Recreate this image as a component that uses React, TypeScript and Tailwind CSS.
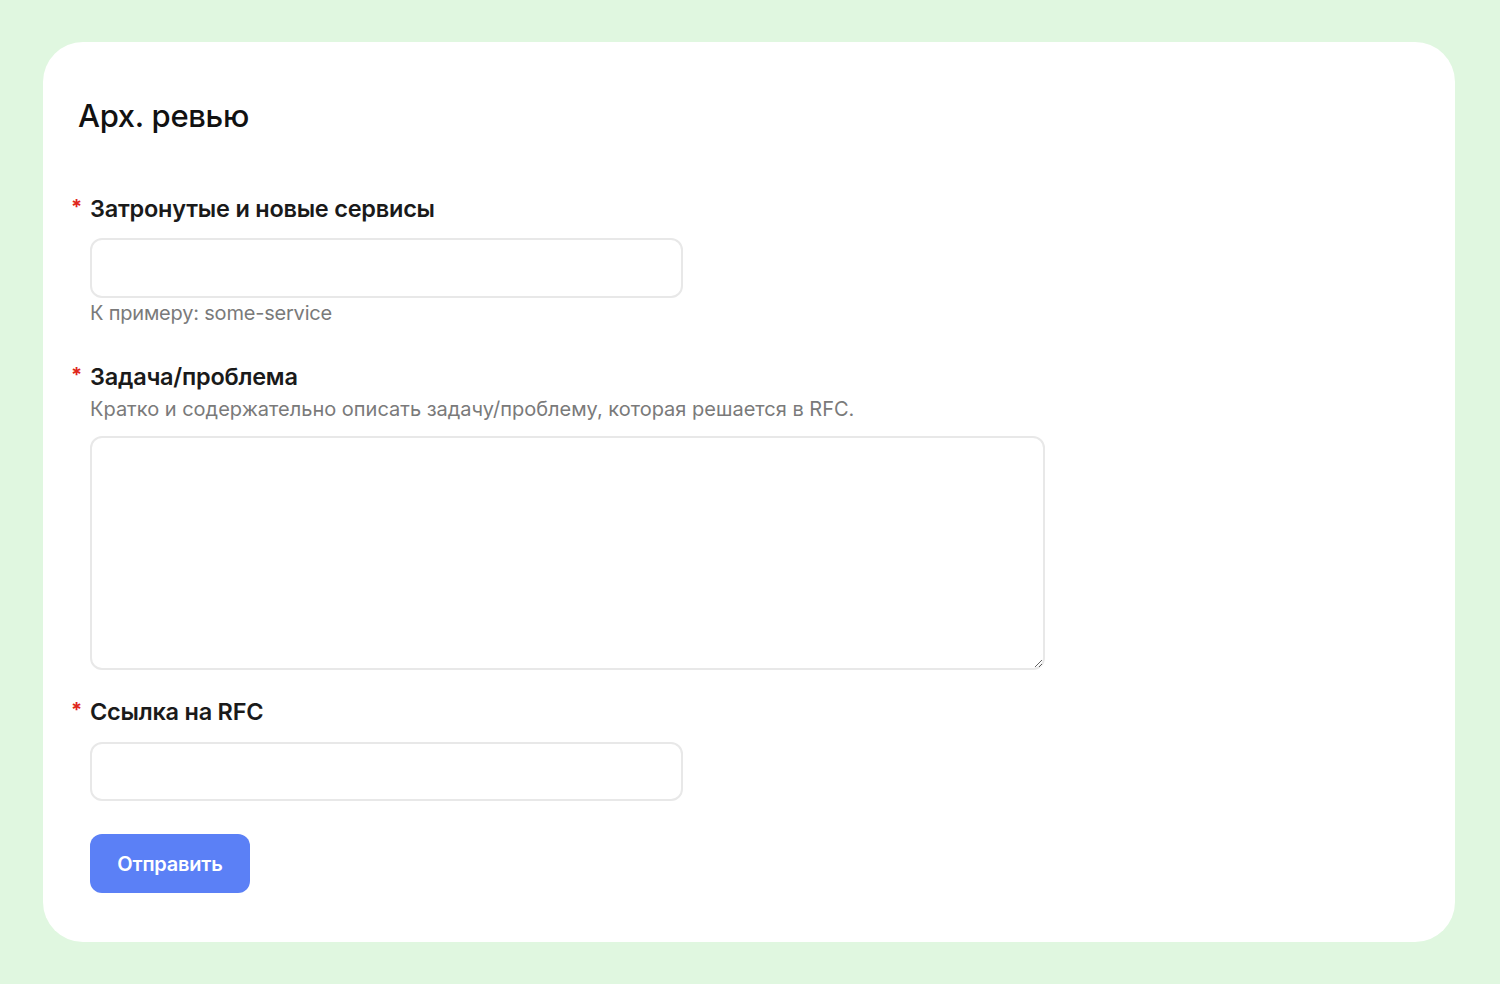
import React from 'react';

const font = { fontFamily: 'Inter, "Noto Sans", sans-serif' };

const Label: React.FC<{ text: string }> = ({ text }) => (
  <div className="flex items-start h-[30px]">
    <span className="w-[20px] text-[#e0261b] text-[20px] leading-[26px] font-bold pl-[1px]">*</span>
    <span className="text-[23.5px] leading-[30px] font-semibold text-[#1a1a1a] tracking-[-0.01em]">{text}</span>
  </div>
);

export default function App() {
  return (
    <div className="min-h-screen w-full bg-[#e0f7e0] pt-[42px] pl-[43px]" style={font}>
      <div className="w-[1412px] h-[900px] bg-white rounded-[40px] pt-[56px] pl-[27px] flex flex-col">
        {/* Title */}
        <h1 className="ml-[8px] text-[31px] leading-[36px] font-medium text-[#111] tracking-[-0.01em]">Арх. ревью</h1>

        {/* Field 1 */}
        <div className="mt-[60px]">
          <Label text="Затронутые и новые сервисы" />
          <div className="ml-[20px]">
            <input className="mt-[14px] block w-[593px] h-[60px] rounded-[12px] border-2 border-[#e8e8e8] outline-none" />
            <div className="mt-[1px] text-[20px] leading-[28px] text-[#7a7a7a] tracking-[-0.01em]">К примеру: some-service</div>
          </div>
        </div>

        {/* Field 2 */}
        <div className="mt-[35px]">
          <Label text="Задача/проблема" />
          <div className="ml-[20px]">
            <div className="mt-[4px] text-[20px] leading-[26px] text-[#7a7a7a]">
              Кратко и содержательно описать задачу/проблему, которая решается в RFC.
            </div>
            <textarea className="mt-[14px] block w-[955px] h-[234px] rounded-[12px] border-2 border-[#e8e8e8] outline-none" />
          </div>
        </div>

        {/* Field 3 */}
        <div className="mt-[27px]">
          <Label text="Ссылка на RFC" />
          <div className="ml-[20px]">
            <input className="mt-[15px] block w-[593px] h-[59px] rounded-[12px] border-2 border-[#e8e8e8] outline-none" />
            <button className="mt-[33px] w-[160px] h-[59px] rounded-[12px] bg-[#5b80f6] text-white text-[20px] font-semibold tracking-[-0.01em]">
              Отправить
            </button>
          </div>
        </div>
      </div>
    </div>
  );
}
